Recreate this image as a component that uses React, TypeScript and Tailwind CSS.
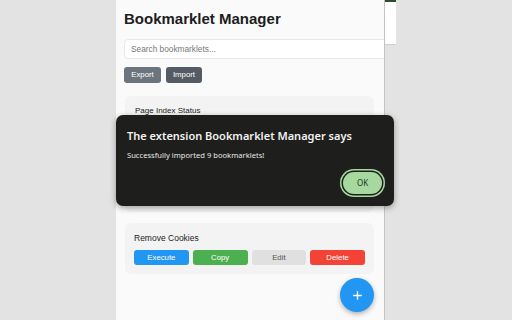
import { Plus } from "lucide-react";

const actions = [
  { label: "Execute", cls: "bg-[#2196f3] text-white" },
  { label: "Copy", cls: "bg-[#4caf50] text-white" },
  { label: "Edit", cls: "bg-[#e0e0e0] text-[#555555]" },
  { label: "Delete", cls: "bg-[#f44336] text-white" },
];

export default function App() {
  return (
    <div className="relative w-[512px] h-[320px] overflow-hidden bg-[#e3e3e3] flex font-['Liberation_Sans',Arial,sans-serif]">
      <div className="w-[116px] shrink-0" />

      {/* popup panel */}
      <div className="relative w-[269px] shrink-0 h-full bg-[#fafafa] border-r border-[#c4c4c4] overflow-hidden px-2 pt-[10px]">
        <h1 className="text-[15px] leading-[18px] font-bold text-[#1d1d1d]">Bookmarklet Manager</h1>

        <input
          className="mt-[11px] w-[290px] h-[20px] rounded-[4px] border border-[#ece6e6] bg-white px-[6px] text-[8.3px] text-[#333] placeholder:text-[#777] outline-none"
          placeholder="Search bookmarklets..."
        />

        <div className="mt-[8px] flex gap-[5px]">
          <button className="h-[16px] w-[37px] rounded-[3px] bg-[#6c757d] text-[7.8px] text-white">Export</button>
          <button className="h-[16px] w-[36px] rounded-[3px] bg-[#545b62] text-[7.8px] text-white">Import</button>
        </div>

        <div className="mt-[13px] ml-px mr-[2px] h-[116px] rounded-md bg-[#f3f3f3] p-[9px] pl-[10px]">
          <div className="text-[8px] leading-[12px] font-medium text-[#222]">Page Index Status</div>
        </div>

        <div className="mt-[11px] ml-px mr-[2px] rounded-md bg-[#f3f3f3] p-[9px]">
          <div className="text-[8.5px] leading-[12px] text-[#1d1d1d]">Remove Cookies</div>
          <div className="mt-[6px] grid grid-cols-4 gap-[4px]">
            {actions.map((a) => (
              <button key={a.label} className={`h-[15px] rounded-[3px] text-[7.8px] ${a.cls}`}>
                {a.label}
              </button>
            ))}
          </div>
        </div>

        <button className="absolute left-[224px] top-[278px] flex h-[34px] w-[34px] items-center justify-center rounded-full bg-[#2196f3] text-white shadow-[0_2px_5px_rgba(0,0,0,0.3)]">
          <Plus size={13} strokeWidth={2.5} />
        </button>
      </div>

      {/* page behind popup */}
      <div className="w-[11px] shrink-0 flex flex-col">
        <div className="h-[2px] bg-[#2f4a32]" />
        <div className="h-[43px] bg-white border-b border-[#cfcfcf]" />
      </div>

      {/* alert dialog */}
      <div className="absolute left-[116px] top-[115px] w-[278px] h-[91px] rounded-[7px] bg-[#1e1f1c] shadow-[0_2px_6px_rgba(0,0,0,0.35)] px-[11px] pt-[13px] font-['Noto_Sans','Open_Sans',sans-serif]">
        <div className="text-[11px] leading-[15px] font-semibold text-[#f2f2f2]">
          The extension Bookmarklet Manager says
        </div>
        <div className="mt-[7px] text-[7.6px] leading-[10px] text-[#e6e6e6]">
          Successfully imported 9 bookmarklets!
        </div>
        <div className="mt-[12px] flex justify-end pr-[1px]">
          <button className="h-[22px] w-[39px] rounded-full bg-[#a6d8a0] text-[8px] text-[#1c3a1c] ring-[1.5px] ring-[#a6d8a0] ring-offset-[1.5px] ring-offset-[#1e1f1c]">
            OK
          </button>
        </div>
      </div>
    </div>
  );
}
